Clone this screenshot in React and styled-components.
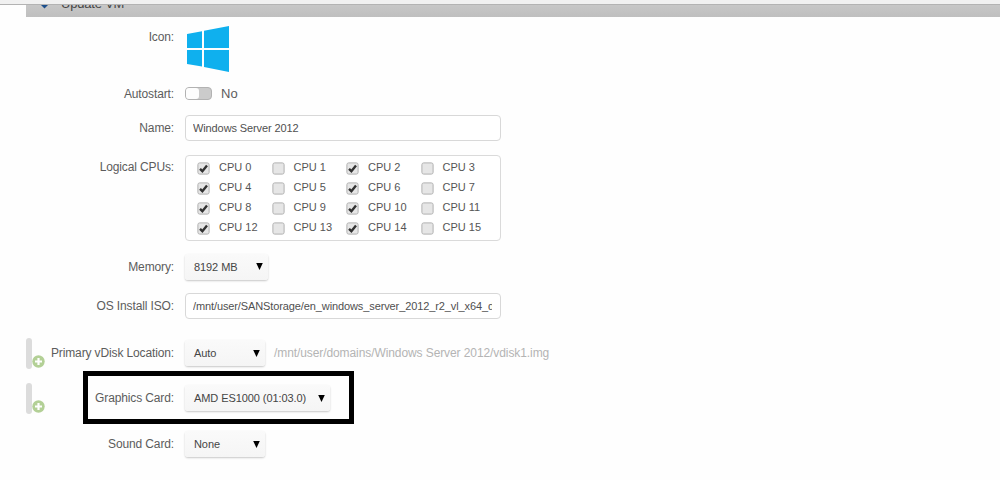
import React from 'react';
import styled, { createGlobalStyle } from 'styled-components';

const GlobalStyle = createGlobalStyle`
  * {
    box-sizing: border-box;
  }

  body {
    margin: 0;
    background: #fefefe;
    color: #5c5c5c;
    font-family: 'Liberation Sans', Arial, sans-serif;
    font-size: 12px;
  }
`;

const Page = styled.div`
  height: 480px;
  overflow: hidden;
`;

const BrowserEdge = styled.div`
  height: 5px;
  background: #f1f1f1;
  border-bottom: 1px solid #b3b3b3;
`;

const TitleBar = styled.header`
  display: flex;
  align-items: flex-end;
  gap: 12px;
  height: 12px;
  margin-left: 26px;
  padding: 0 0 8px 14px;
  overflow: hidden;
  background: linear-gradient(#c7c7c7, #bfbfbf);
`;

const TitleIcon = styled.svg`
  flex: none;
  width: 9px;
  height: 9px;
`;

const Title = styled.span`
  height: 14px;
  margin-bottom: -2px;
  font-size: 13px;
  line-height: 14px;
  letter-spacing: -0.2px;
  color: #444;
`;

const Row = styled.div`
  display: grid;
  grid-template-columns: 26px 148px 1fr;
  align-items: ${props => (props.top ? 'start' : 'center')};
  height: ${props => props.size}px;
  padding-top: ${props => props.top || 0}px;
`;

const Label = styled.label`
  grid-column: 2;
  margin-top: ${props => props.drop || 0}px;
  line-height: 14px;
  letter-spacing: -0.13px;
  text-align: right;
  white-space: nowrap;
`;

const Field = styled.div`
  grid-column: 3;
  display: flex;
  align-items: center;
  padding-left: 11px;
`;

const Logo = styled.svg`
  width: 44px;
  height: 47px;
  margin-left: 1px;
`;

const Toggle = styled.span`
  width: 27px;
  height: 13px;
  border: 1px solid #b2b2b2;
  border-radius: 4px;
  background: #cbcbcb;

  &::before {
    content: '';
    display: block;
    width: 13px;
    height: 11px;
    border-radius: 3px;
    background: #fdfdfd;
  }
`;

const ToggleText = styled.span`
  margin-left: 9px;
  font-size: 13px;
`;

const Input = styled.input`
  width: 316px;
  height: 26px;
  padding: 0 8px 0 7px;
  border: 1px solid #d8d8d8;
  border-radius: 4px;
  background: #fff;
  color: #505050;
  font: 11px 'Liberation Sans', Arial, sans-serif;
  letter-spacing: -0.11px;
`;

const Cpus = styled.div`
  display: grid;
  grid-template-columns: repeat(4, 74.5px);
  grid-auto-rows: 20px;
  width: 316px;
  height: 86px;
  padding: 1px 0 0 11px;
  border: 1px solid #dadada;
  border-radius: 4px;
  background: #fff;
`;

const Cpu = styled.label`
  display: flex;
  align-items: center;
  gap: 9px;
  font-size: 11px;
  color: #555;
`;

const Box = styled.svg`
  width: 13px;
  height: 13px;
  margin-top: 2px;
`;

const SelectButton = styled.button`
  display: flex;
  align-items: center;
  justify-content: space-between;
  width: ${props => props.width}px;
  height: 26px;
  padding: 0 5px 0 9px;
  border: 0;
  border-radius: 3px;
  background: linear-gradient(#fafafa, #f5f5f5);
  box-shadow: 0 1px 2px rgba(0, 0, 0, 0.22);
  color: #454545;
  font: 11px 'Liberation Sans', Arial, sans-serif;
  letter-spacing: -0.08px;
`;

const Arrow = styled.svg`
  width: 7px;
  height: 7px;
`;

const Hint = styled.span`
  margin-left: 9px;
  letter-spacing: -0.09px;
  color: #b4b4b4;
`;

const Marker = styled.div`
  grid-column: 1;
  display: flex;
  align-items: flex-end;
  width: 20px;
  height: 31px;
  margin-left: 26px;
`;

const Handle = styled.div`
  flex: none;
  width: 6px;
  height: 31px;
  border-radius: 3px;
  background: #dcdcdc;
`;

const Plus = styled.svg`
  flex: none;
  width: 13px;
  height: 13px;
  margin-bottom: 1px;
`;

// outline drawn over the graphics card row
const Highlight = styled.div`
  position: absolute;
  top: 371px;
  left: 83px;
  width: 271px;
  height: 53px;
  border: 5px solid #000;
`;

function Checkbox({ checked }) {
  return (
    <Box viewBox="0 0 13 13">
      <rect
        x="0.9"
        y="0.9"
        width="11.2"
        height="11.2"
        rx="1.8"
        fill="#e6e6e6"
        stroke="#b0b0b0"
      />
      {checked && (
        <path d="M3 6.8L5.4 9.2L10 3.4" fill="none" stroke="#333" strokeWidth="2.4" />
      )}
    </Box>
  );
}

function Select({ width, children }) {
  return (
    <SelectButton type="button" width={width}>
      {children}
      <Arrow viewBox="0 0 7 7">
        <path d="M0.2 0H6.8L3.5 7Z" fill="#000" />
      </Arrow>
    </SelectButton>
  );
}

function AddMarker() {
  return (
    <Marker>
      <Handle />
      <Plus viewBox="0 0 13 13">
        <circle cx="6.5" cy="6.5" r="6.2" fill="#b3d096" />
        <path d="M6.5 3V10M3 6.5H10" stroke="#fff" strokeWidth="2.2" />
      </Plus>
    </Marker>
  );
}

const cpus = Array.from({ length: 16 }, (_, i) => i);

export default function App() {
  return (
    <Page>
      <GlobalStyle />
      <BrowserEdge />
      <TitleBar>
        <TitleIcon viewBox="0 0 9 9">
          <path d="M0.5 4.5L4.5 0L8.5 4.5L4.5 8.5Z" fill="#1c4f8c" />
        </TitleIcon>
        <Title>Update VM</Title>
      </TitleBar>

      <Row size={63} top={9}>
        <Label drop={4}>Icon:</Label>
        <Field>
          <Logo viewBox="0 0 44 47">
            <path
              d="M1 8L16 5.2V22H1ZM18 4.8L43 0V22H18ZM1 24H16V40.5L1 38ZM18 24H43V46L18 41Z"
              fill="#0fb0ee"
            />
          </Logo>
        </Field>
      </Row>

      <Row size={27}>
        <Label>Autostart:</Label>
        <Field>
          <Toggle />
          <ToggleText>No</ToggleText>
        </Field>
      </Row>

      <Row size={41}>
        <Label>Name:</Label>
        <Field>
          <Input defaultValue="Windows Server 2012" />
        </Field>
      </Row>

      <Row size={99} top={7}>
        <Label drop={5}>Logical CPUs:</Label>
        <Field>
          <Cpus>
            {cpus.map(cpu => (
              <Cpu key={cpu}>
                <Checkbox checked={cpu % 2 === 0} />
                CPU {cpu}
              </Cpu>
            ))}
          </Cpus>
        </Field>
      </Row>

      <Row size={39}>
        <Label>Memory:</Label>
        <Field>
          <Select width={83}>8192 MB</Select>
        </Field>
      </Row>

      <Row size={40}>
        <Label>OS Install ISO:</Label>
        <Field>
          <Input defaultValue="/mnt/user/SANStorage/en_windows_server_2012_r2_vl_x64_dvd.iso" />
        </Field>
      </Row>

      <Row size={54}>
        <AddMarker />
        <Label>Primary vDisk Location:</Label>
        <Field>
          <Select width={80}>Auto</Select>
          <Hint>/mnt/user/domains/Windows Server 2012/vdisk1.img</Hint>
        </Field>
      </Row>

      <Row size={36}>
        <AddMarker />
        <Label>Graphics Card:</Label>
        <Field>
          <Select width={145}>AMD ES1000 (01:03.0)</Select>
        </Field>
      </Row>

      <Row size={56}>
        <Label>Sound Card:</Label>
        <Field>
          <Select width={80}>None</Select>
        </Field>
      </Row>

      <Highlight />
    </Page>
  );
}
